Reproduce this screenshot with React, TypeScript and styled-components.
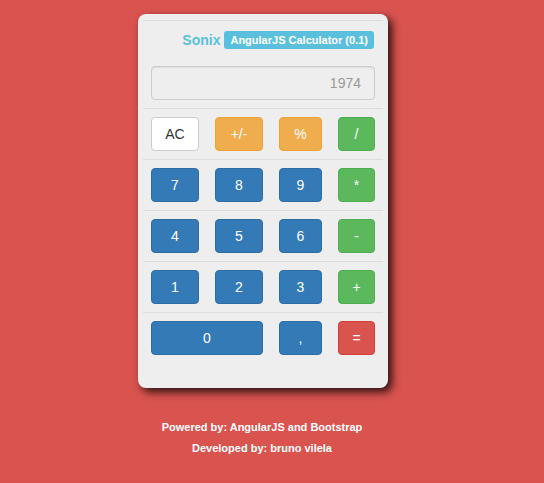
import React from "react";
import styled, { createGlobalStyle } from "styled-components";

const Global = createGlobalStyle`
  html, body { margin: 0; padding: 0; }
  body {
    background: #d9534f;
    font-family: "Liberation Sans", Arial, Helvetica, sans-serif;
    font-size: 14px;
    color: #333;
  }
`;

const Page = styled.div`
  padding: 14px 0 0 138px;
  width: 250px;
`;

const Card = styled.div`
  width: 250px;
  box-sizing: border-box;
  background: #eeeeee;
  border-radius: 8px;
  box-shadow: 4px 4px 9px rgba(0, 0, 0, 0.8);
  padding: 6px 5px 25px;
`;

const Rule = styled.div`
  height: 1px;
  background: #dcdcdc;
`;

const Header = styled.div`
  display: flex;
  justify-content: flex-end;
  align-items: center;
  gap: 4px;
  padding: 10px 9px 0 0;
  height: 18px;
`;

const Brand = styled.span`
  color: #5bc0de;
  font-weight: bold;
  font-size: 14px;
  line-height: 18px;
`;

const Badge = styled.span`
  background: #5bc0de;
  color: #fff;
  font-weight: bold;
  font-size: 11px;
  line-height: 18px;
  height: 18px;
  padding: 0 6px;
  border-radius: 3px;
  white-space: nowrap;
`;

const DisplayWrap = styled.div`
  padding: 17px 8px 8px;
`;

const Display = styled.div`
  height: 34px;
  box-sizing: border-box;
  border: 1px solid #cccccc;
  border-radius: 4px;
  background: #eeeeee;
  box-shadow: inset 0 1px 1px rgba(0, 0, 0, 0.075);
  color: #999;
  font-size: 14px;
  text-align: right;
  padding: 0 13px;
  line-height: 32px;
`;

const Row = styled.div`
  display: grid;
  grid-template-columns: 48px 48px 43px 37px;
  column-gap: 16px;
  padding: 8px 8px;
`;

const palette = {
  default: { bg: "#ffffff", border: "#cccccc", color: "#333333" },
  primary: { bg: "#337ab7", border: "#2e6da4", color: "#ffffff" },
  warning: { bg: "#f0ad4e", border: "#eea236", color: "#ffffff" },
  success: { bg: "#5cb85c", border: "#4cae4c", color: "#ffffff" },
  danger: { bg: "#d9534f", border: "#d43f3a", color: "#ffffff" },
};

type Variant = keyof typeof palette;

const Key = styled.button<{ $v: Variant; $span?: number }>`
  grid-column: span ${(p) => p.$span || 1};
  height: 34px;
  margin: 0;
  padding: 0;
  box-sizing: border-box;
  border-radius: 4px;
  border: 1px solid ${(p) => palette[p.$v].border};
  background: ${(p) => palette[p.$v].bg};
  color: ${(p) => palette[p.$v].color};
  font-family: "Liberation Sans", Arial, Helvetica, sans-serif;
  font-size: 14px;
  line-height: 20px;
  cursor: pointer;
`;

const Footer = styled.div`
  padding-top: 29px;
  text-align: center;
  color: #fff;
  font-weight: bold;
  font-size: 11px;
  line-height: 21px;
  margin-left: -2px;
`;

const rows: { label: string; v: Variant; span?: number }[][] = [
  [
    { label: "AC", v: "default" },
    { label: "+/-", v: "warning" },
    { label: "%", v: "warning" },
    { label: "/", v: "success" },
  ],
  [
    { label: "7", v: "primary" },
    { label: "8", v: "primary" },
    { label: "9", v: "primary" },
    { label: "*", v: "success" },
  ],
  [
    { label: "4", v: "primary" },
    { label: "5", v: "primary" },
    { label: "6", v: "primary" },
    { label: "-", v: "success" },
  ],
  [
    { label: "1", v: "primary" },
    { label: "2", v: "primary" },
    { label: "3", v: "primary" },
    { label: "+", v: "success" },
  ],
  [
    { label: "0", v: "primary", span: 2 },
    { label: ",", v: "primary" },
    { label: "=", v: "danger" },
  ],
];

export default function App() {
  return (
    <>
      <Global />
      <Page>
        <Card>
          <Rule />
          <Header>
            <Brand>Sonix</Brand>
            <Badge>AngularJS Calculator (0.1)</Badge>
          </Header>
          <DisplayWrap>
            <Display>1974</Display>
          </DisplayWrap>
          {rows.map((r, i) => (
            <React.Fragment key={i}>
              <Rule />
              <Row>
                {r.map((k) => (
                  <Key key={k.label} $v={k.v} $span={k.span}>
                    {k.label}
                  </Key>
                ))}
              </Row>
            </React.Fragment>
          ))}
        </Card>
        <Footer>
          <div>Powered by: AngularJS and Bootstrap</div>
          <div>Developed by: bruno vilela</div>
        </Footer>
      </Page>
    </>
  );
}
